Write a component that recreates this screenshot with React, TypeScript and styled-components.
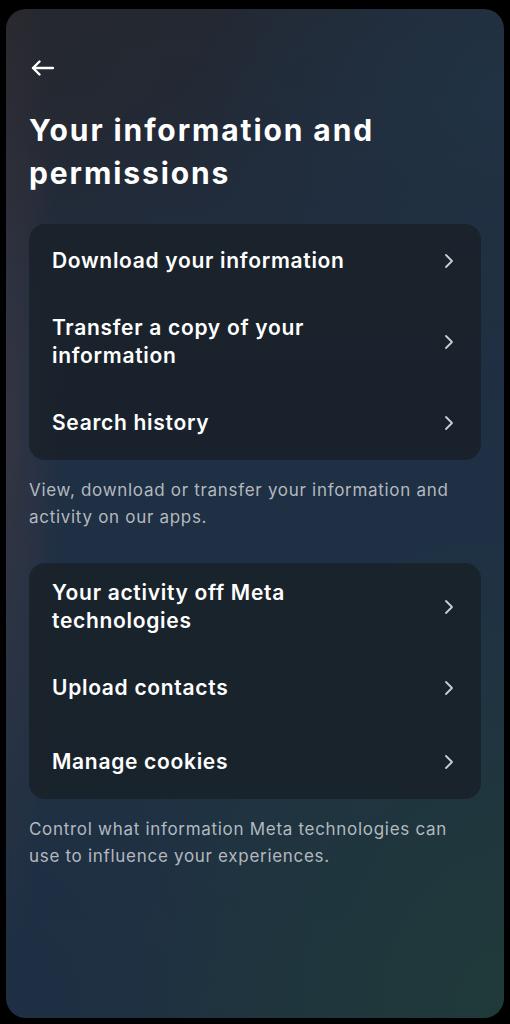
import styled, { createGlobalStyle } from "styled-components";

const GlobalStyle = createGlobalStyle`
  html, body {
    margin: 0;
    padding: 0;
    background: #000;
  }
  * {
    box-sizing: border-box;
  }
`;

type Item = { label: string };
type Section = { items: Item[]; caption: string };

const sections: Section[] = [
  {
    items: [
      { label: "Download your information" },
      { label: "Transfer a copy of your information" },
      { label: "Search history" },
    ],
    caption: "View, download or transfer your information and activity on our apps.",
  },
  {
    items: [
      { label: "Your activity off Meta technologies" },
      { label: "Upload contacts" },
      { label: "Manage cookies" },
    ],
    caption: "Control what information Meta technologies can use to influence your experiences.",
  },
];

export default function App() {
  return (
    <>
      <GlobalStyle />
      <Screen>
        <BackBtn aria-label="Back">
          <svg width="24" height="16" viewBox="0 0 24 16" fill="none">
            <path
              d="M23 8H3M9.5 1.5L3 8l6.5 6.5"
              stroke="#fff"
              strokeWidth="2.4"
              strokeLinecap="round"
              strokeLinejoin="round"
            />
          </svg>
        </BackBtn>
        <Title>Your information and permissions</Title>
        {sections.map((s) => (
          <div key={s.caption}>
            <Card>
              {s.items.map((it) => (
                <Row key={it.label}>
                  <RowLabel>{it.label}</RowLabel>
                  <Chevron width="10" height="16" viewBox="0 0 10 16" fill="none">
                    <path
                      d="M2 2l6 6-6 6"
                      stroke="#c9ced3"
                      strokeWidth="1.8"
                      strokeLinecap="round"
                      strokeLinejoin="round"
                    />
                  </Chevron>
                </Row>
              ))}
            </Card>
            <Caption>{s.caption}</Caption>
          </div>
        ))}
      </Screen>
    </>
  );
}

const Screen = styled.div`
  margin: 9px 6px 0;
  width: 498px;
  height: 1009px;
  border-radius: 20px;
  padding: 51px 23px 0;
  overflow: hidden;
  font-family: Inter, "Noto Sans", sans-serif;
  color: #fff;
  background:
    radial-gradient(ellipse 55px 520px at 0% 42%, rgba(72, 58, 64, 0.5), transparent 100%),
    radial-gradient(ellipse 280px 260px at 0% 0%, rgba(38, 40, 46, 0.9), transparent 100%),
    radial-gradient(ellipse 240px 340px at 0% 100%, rgba(30, 44, 70, 0.6), transparent 100%),
    radial-gradient(ellipse 320px 300px at 100% 8%, rgba(31, 54, 74, 0.7), transparent 100%),
    radial-gradient(ellipse 380px 520px at 100% 100%, rgba(32, 60, 55, 0.75), transparent 100%),
    linear-gradient(180deg, #232833 0%, #1f2f44 40%, #1f3045 60%, #1f3240 100%);
`;

const BackBtn = styled.button`
  display: block;
  padding: 0;
  margin: 0 0 0 1px;
  border: none;
  background: none;
  height: 16px;
  cursor: pointer;
`;

const Title = styled.h1`
  margin: 33px 0 0;
  font-size: 30px;
  line-height: 43px;
  font-weight: 700;
  letter-spacing: 1.9px;
  max-width: 400px;
`;

const Card = styled.div`
  margin-top: 29px;
  border-radius: 16px;
  background: rgba(25, 33, 41, 0.88);
  display: flex;
  flex-direction: column;
`;

const Row = styled.div`
  display: flex;
  align-items: center;
  justify-content: space-between;
  min-height: 74px;
  padding: 16px 27px 16px 23px;
  cursor: pointer;
`;

const RowLabel = styled.span`
  font-size: 21px;
  line-height: 28px;
  font-weight: 600;
  letter-spacing: 0.7px;
  max-width: 300px;
`;

const Chevron = styled.svg`
  flex-shrink: 0;
`;

const Caption = styled.p`
  margin: 17px 0 32px;
  font-size: 17px;
  line-height: 27px;
  color: #b3b9bf;
  letter-spacing: 0.7px;
  padding-right: 20px;
`;
